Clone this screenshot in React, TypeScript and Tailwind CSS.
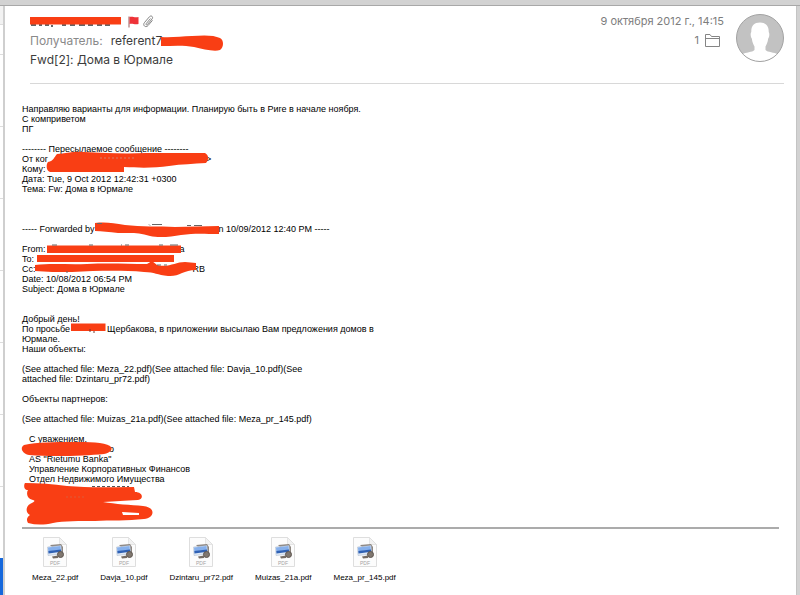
import { FC } from "react";

interface MailLine {
  text: string;
  // text that continues after the part that is struck out
  tail?: string;
  gap?: string;
}

const bodyLines: MailLine[] = [
  { text: "Направляю варианты для информации. Планирую быть в Риге в начале ноября." },
  { text: "С комприветом" },
  { text: "ПГ" },
  { text: "" },
  { text: "-------- Пересылаемое сообщение --------" },
  { text: "От ког", gap: "w-[158px]", tail: ">" },
  { text: "Кому:" },
  { text: "Дата: Tue, 9 Oct 2012 12:42:31 +0300" },
  { text: "Тема: Fw: Дома в Юрмале" },
  { text: "" },
  { text: "" },
  { text: "" },
  { text: "----- Forwarded by", gap: "w-[124px]", tail: "n 10/09/2012 12:40 PM -----" },
  { text: "" },
  { text: "From:", gap: "w-[134px]", tail: "a" },
  { text: "To:" },
  { text: "Cc:", gap: "w-[157px]", tail: "RB" },
  { text: "Date: 10/08/2012 06:54 PM" },
  { text: "Subject: Дома в Юрмале" },
  { text: "" },
  { text: "" },
  { text: "Добрый день!" },
  { text: "По просьбе", gap: "w-[37px]", tail: "Щербакова, в приложении высылаю Вам предложения домов в" },
  { text: "Юрмале." },
  { text: "Наши объекты:" },
  { text: "" },
  { text: "(See attached file: Meza_22.pdf)(See attached file: Davja_10.pdf)(See" },
  { text: "attached file: Dzintaru_pr72.pdf)" },
  { text: "" },
  { text: "Объекты партнеров:" },
  { text: "" },
  { text: "(See attached file: Muizas_21a.pdf)(See attached file: Meza_pr_145.pdf)" },
  { text: "" },
];

const signature: MailLine[] = [
  { text: "С уважением," },
  { text: "", gap: "w-[80px]", tail: "о" },
  { text: 'AS "Rietumu Banka"' },
  { text: "Управление Корпоративных Финансов" },
  { text: "Отдел Недвижимого Имущества" },
  { text: "" },
  { text: "" },
  { text: "" },
  { text: "" },
];

const attachments = [
  "Meza_22.pdf",
  "Davja_10.pdf",
  "Dzintaru_pr72.pdf",
  "Muizas_21a.pdf",
  "Meza_pr_145.pdf",
];

const Line: FC<{ line: MailLine }> = ({ line }) => (
  <p className="h-[10px] whitespace-nowrap">
    {line.text}
    {line.gap && <span className={`inline-block ${line.gap}`} />}
    {line.tail}
  </p>
);

const PdfIcon = () => (
  <svg width="24" height="30" viewBox="0 0 24 30" aria-hidden="true">
    <path d="M.5.5h16l7 7v22H.5z" fill="#fcfcfc" stroke="#dedede" />
    <path d="M16.5.5v7h7z" fill="#f2f2f2" stroke="#dcdcdc" strokeWidth=".7" />
    <path d="M7 8l11-1 2 3v7l-3 1z" fill="#8d8680" />
    <path d="M4.500 10l13.500-1.500.8 8.500-13.800 1.500z" fill="#dfe9f6" stroke="#a9b6c8" strokeWidth=".5" />
    <path d="M5 10.500l12.500-1.400.3 4-12.500 1.400z" fill="#86b0ec" />
    <path d="M5.300 14l12.700-1.500.2 2.300-12.700 1.700z" fill="#2f61b4" />
    <circle cx="17.500" cy="17.500" r="3" fill="#80776f" stroke="#5d554f" />
    <path d="M9 19.500l6-1v2.500l-5 .5z" fill="#756c64" />
    <text x="12" y="28" textAnchor="middle" fontSize="5" fill="#a3a3a3" fontFamily="Liberation Sans, sans-serif">
      PDF
    </text>
  </svg>
);

// marker strokes over the header
const HeaderMarks = () => (
  <svg className="pointer-events-none absolute left-0 top-0" width="240" height="60" viewBox="5 6 240 60" aria-hidden="true">
    <path d="M31 25h5m3 0h3m3 0h4m3 0v2m10-2h4m4 0h5m4 0h6m3 0h5m4 0h5m3 0h5" stroke="#333" strokeWidth="1.500" fill="none" />
    <path d="M30 17h91v7.500H30z" fill="#f93e14" />
    <path d="M161 37c11 1 20-1 31-1 12-1 22-1 28 2 4 2 4 9 0 12-6 2-17-1-26-3-10-2-22-1-33-1z" fill="#f93e14" />
  </svg>
);

// marker strokes over the message text
const BodyMarks = () => (
  <svg className="pointer-events-none absolute left-0 top-0" width="240" height="444" viewBox="5 84 240 444" aria-hidden="true">
    <g fill="#f93e14">
      <path d="M57 154c8 0 16-3 27-2 20 1 40 2 62 1h59c4 2 4 7 1 10-13 1-24 1-37 3-14 2-28 2-45 1v5H50c-4-1-4-8-2-10 6-1 6-5 9-8z" />
      <path d="M95 223c11-1 18 0 30 2 16 2 34 1 50 2l44-1v8c-14 0-24-1-38 1-10 2-23 3-31 1-12-4-20-3-32-3-9-1-16-2-23-2z" />
      <path d="M47 245.500h134v7.500H47z" />
      <path d="M37 255h137v7H37z" />
      <path d="M35 265c18-2 34 0 52-1 22-1 41 0 60 0l5-3 5 4c12 3 18-3 28-3l11 1v7c-13 0-17 7-28 6-11-1-13-4-24-4-25-2-48-1-72 0-15 0-25 0-37-1z" />
      <path d="M71 323.500h34.500v7.500H71z" />
      <path d="M24 445c13-3 31-3 48-3 17 0 32 0 38 4 4 3 0 7-6 8-20 2-53 3-75 1-6-1-10-7-5-10z" />
      <path d="M25 483c14 0 28 1 42 3 23 2 45 1 67 1l1 5c8 0 9 7 3 8-14 1-22 1-35 2 12 2 28 3 40 4 13 1 12 12 1 13-16 2-34 1-49 2-14 0-32 0-42 2-9 2-17 2-25 0-2-3-1-6 2-8-5-2-4-9 0-11 4-2 6-3 3-4-6-1-7-7-5-10-5 0-4-6-3-7z" />
    </g>
    <path d="M122 512l17 1v2h-16z" fill="#fff" />
    <path d="M100 158h34" stroke="#d67a66" strokeDasharray="2 2" />
    <path d="M66 497h20" stroke="#dd5a38" strokeDasharray="2 2" />
    <path d="M92 486.500h37" stroke="#555" strokeDasharray="3 2" />
    <path d="M90 329v3m4-1v2" stroke="#6a3a30" />
    <path d="M97 223.500h5m47 1l1 1m2-1h10m25 1h4m3 0h8" stroke="#666" fill="none" />
    <path d="M52 245h5m32 0h4m28 0h1m3 0h4m30 0h4m7 0h8" stroke="#666" fill="none" />
    <path d="M157 265h4m3 0h3M66 272h2" stroke="#666" fill="none" />
  </svg>
);

const App = () => {
  return (
    <div className="flex min-h-screen flex-col overflow-hidden bg-white font-['Liberation_Sans',Arial,sans-serif] text-black">
      <div className="h-[6px] shrink-0 border-b border-[#a8a8a8] bg-[#d2d2d2]" />
      <div className="flex flex-1">
        {/* edge of the message list */}
        <aside className="flex w-[5px] shrink-0 flex-col border-r-2 border-[#cfcfcf]">
          <div className="h-[19px] border-b border-[#ddd] bg-[#f2f2f2]" />
          <div className="h-[30px] border-b border-[#ddd]" />
          {[0, 1, 2, 3, 4, 5].map((row) => (
            <div key={row} className="h-[72px] border-b border-[#ddd]" />
          ))}
          <div className="h-[71px]" />
          <div className="flex-1 bg-[#1668dc]" />
        </aside>

        <main className="min-w-0 flex-1">
          <header className="relative pl-[25px] pr-3 font-[Inter,Roboto,sans-serif] text-[12px] leading-[19px]">
            <div className="flex justify-between border-b border-[#d8d8d8] pb-[14px] pt-[6px]">
              <div className="text-[#3c3c3c]">
                <div className="flex h-[19px] items-center gap-[3px] pl-[98px]">
                  <svg width="11" height="12" viewBox="0 0 11 12" aria-label="Флажок">
                    <path d="M1 .5v11" stroke="#9a5a5a" />
                    <path d="M1.500 1c3-.8 5 .8 9 0v7c-4 .8-6-.8-9 0z" fill="#ee3338" />
                  </svg>
                  <svg width="12" height="13" viewBox="0 0 12 13" fill="none" stroke="#777" strokeWidth=".9" aria-label="Вложение">
                    <path d="M8.500 3.500L4.200 8.600c-.7.9.4 1.800 1.100 1L10 4c1.700-2.100-.8-4.200-2.600-2.200L2.500 7.500c-2.300 2.800 1.200 5.800 3.600 3L10.500 5.300" />
                  </svg>
                </div>
                <p className="whitespace-nowrap">
                  <span className="mr-2 text-[#8a8a8a]">Получатель:</span>
                  referent7
                </p>
                <h1 className="whitespace-nowrap">Fwd[2]: Дома в Юрмале</h1>
              </div>
              <div className="flex gap-3">
                <div className="flex flex-col items-end text-[11px] text-[#7d7d7d]">
                  <time dateTime="2012-10-09T14:15" className="whitespace-nowrap">
                    9 октября 2012 г., 14:15
                  </time>
                  <div className="flex items-center gap-[6px] pr-1">
                    <span>1</span>
                    <svg width="15" height="13" viewBox="0 0 15 13" fill="none" stroke="#858585" aria-hidden="true">
                      <path d="M.5 12.500V.5H5l1.500 2h8v10zM.5 4.500h14" />
                    </svg>
                  </div>
                </div>
                <svg width="48" height="48" viewBox="0 0 48 48" className="mt-[2px]" aria-label="Фото">
                  <defs>
                    <clipPath id="avatar">
                      <circle cx="24" cy="24" r="23.500" />
                    </clipPath>
                  </defs>
                  <g clipPath="url(#avatar)">
                    <rect width="48" height="48" fill="#c2c2c2" />
                    <path
                      d="M24 8.500c6 0 9 3.500 8.700 9.500 1 1 .8 5-.5 6.500-.5 4-1.700 6-2.700 8v3.500c2 2.500 9 2 12.500 4.500l4 8H2l4-8c3.500-2.500 10.500-2 12.500-4.500v-3.500c-1-2-2.200-4-2.700-8-1.300-1.500-1.500-5.500-.5-6.500-.3-6 2.700-9.500 8.700-9.500z"
                      fill="#fff"
                    />
                  </g>
                  <circle cx="24" cy="24" r="23.500" fill="none" stroke="#a2a2a2" />
                </svg>
              </div>
            </div>
            <HeaderMarks />
          </header>

          <article className="relative pt-5 text-[9px] leading-[10px]">
            <div className="pl-[17px]">
              {bodyLines.map((line, i) => (
                <Line key={i} line={line} />
              ))}
            </div>
            <div className="pl-6">
              {signature.map((line, i) => (
                <Line key={i} line={line} />
              ))}
            </div>
            <BodyMarks />
          </article>

          <footer className="mx-[17px] mt-[3px] border-t-2 border-[#ababab] pl-[10px] pt-2">
            <ul className="flex gap-[22px] text-[8px] leading-[10px]">
              {attachments.map((name) => (
                <li key={name}>
                  <button type="button" className="flex flex-col items-center gap-[6px] whitespace-nowrap">
                    <PdfIcon />
                    {name}
                  </button>
                </li>
              ))}
            </ul>
          </footer>
        </main>

        <div className="w-1 shrink-0 border-l border-[#c4c4c4] bg-[#d2d2d2]" />
      </div>
    </div>
  );
};

export default App;
